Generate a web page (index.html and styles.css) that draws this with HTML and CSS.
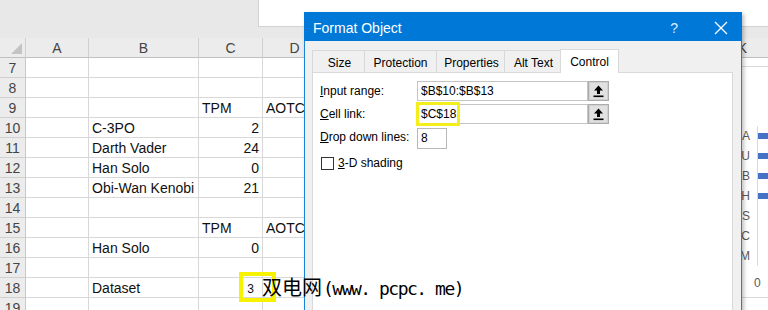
FILE: index.html
```html
<!DOCTYPE html>
<html lang="en">
<head>
  <meta charset="UTF-8">
  <title>Format Object</title>
  <link rel="stylesheet" href="styles.css">
</head>
<body>
  <div class="screen">
    <div class="ribbon">
      <div class="formula-box"></div>
    </div>

    <div class="sheet">
      <div class="row head"><div class="corner"></div><div>A</div><div>B</div><div>C</div><div>D</div><div></div><div>K</div></div>
      <div class="row"><div class="rh">7</div><div></div><div></div><div></div><div></div><div></div><div></div></div>
      <div class="row"><div class="rh">8</div><div></div><div></div><div></div><div></div><div></div><div></div></div>
      <div class="row"><div class="rh">9</div><div></div><div></div><div>TPM</div><div>AOTC</div><div></div><div></div></div>
      <div class="row"><div class="rh">10</div><div></div><div>C-3PO</div><div class="num">2</div><div></div><div></div><div></div></div>
      <div class="row"><div class="rh">11</div><div></div><div>Darth Vader</div><div class="num">24</div><div></div><div></div><div></div></div>
      <div class="row"><div class="rh">12</div><div></div><div>Han Solo</div><div class="num">0</div><div></div><div></div><div></div></div>
      <div class="row"><div class="rh">13</div><div></div><div>Obi-Wan Kenobi</div><div class="num">21</div><div></div><div></div><div></div></div>
      <div class="row"><div class="rh">14</div><div></div><div></div><div></div><div></div><div></div><div></div></div>
      <div class="row"><div class="rh">15</div><div></div><div></div><div>TPM</div><div>AOTC</div><div></div><div></div></div>
      <div class="row"><div class="rh">16</div><div></div><div>Han Solo</div><div class="num">0</div><div></div><div></div><div></div></div>
      <div class="row"><div class="rh">17</div><div></div><div></div><div></div><div></div><div></div><div></div></div>
      <div class="row"><div class="rh">18</div><div></div><div>Dataset</div><div class="num linked">3</div><div></div><div></div><div></div></div>
      <div class="row"><div class="rh">19</div><div></div><div></div><div></div><div></div><div></div><div></div></div>
    </div>

    <!-- chart sitting on the sheet, mostly hidden by the dialog -->
    <div class="chart">
      <div class="chart-rows">
        <div class="bar-row"><span>A</span><i></i></div>
        <div class="bar-row"><span>U</span><i></i></div>
        <div class="bar-row"><span>B</span><i></i></div>
        <div class="bar-row"><span>H</span><i></i></div>
        <div class="bar-row"><span>S</span></div>
        <div class="bar-row"><span>C</span></div>
        <div class="bar-row"><span>M</span></div>
      </div>
      <div class="axis-label">0</div>
    </div>

    <div class="cell-mark"></div>

    <div class="dialog">
      <div class="titlebar">
        <span class="title">Format Object</span>
        <span class="help">?</span>
        <svg class="close" width="14" height="14" viewBox="0 0 14 14"><path d="M1 1 L13 13 M13 1 L1 13" stroke="#fff" stroke-width="1.3"/></svg>
      </div>
      <div class="tabs">
        <div class="tab t-size">Size</div>
        <div class="tab t-prot">Protection</div>
        <div class="tab t-prop">Properties</div>
        <div class="tab t-alt">Alt Text</div>
        <div class="tab t-ctrl active">Control</div>
      </div>
      <div class="panel">
        <div class="form-row">
          <label><u>I</u>nput range:</label>
          <div class="field wide">$B$10:$B$13</div>
          <div class="pick"><svg width="11" height="13" viewBox="0 0 11 13"><path d="M5.5 0.5 L10 5.5 H7 V9 H4 V5.5 H1 Z" fill="#000"/><rect x="0.5" y="10.5" width="10" height="1.6" fill="#000"/></svg></div>
        </div>
        <div class="form-row">
          <label><u>C</u>ell link:</label>
          <div class="field wide">$C$18<span class="link-mark"></span></div>
          <div class="pick"><svg width="11" height="13" viewBox="0 0 11 13"><path d="M5.5 0.5 L10 5.5 H7 V9 H4 V5.5 H1 Z" fill="#000"/><rect x="0.5" y="10.5" width="10" height="1.6" fill="#000"/></svg></div>
        </div>
        <div class="form-row">
          <label><u>D</u>rop down lines:</label>
          <div class="field small">8</div>
        </div>
        <div class="check-row">
          <span class="box"></span>
          <span><u>3</u>-D shading</span>
        </div>
      </div>
    </div>

    <div class="watermark"><span class="wm-cn">双电网</span><span class="wm-en">(www. pcpc. me)</span></div>
  </div>
</body>
</html>
```

FILE: styles.css
```css
* {
  box-sizing: border-box;
}

body {
  margin: 0;
  font-family: "Liberation Sans", Arial, sans-serif;
  background-color: #fff;
  overflow: hidden;
}

.screen {
  position: relative;
  width: 768px;
  height: 310px;
  overflow: hidden;
}

.ribbon {
  height: 38px;
  background-color: #e8e8e8;
  padding-left: 258px;
}

.formula-box {
  height: 27px;
  background-color: #fff;
  border-left: 1px solid #d2d2d2;
  border-bottom: 1px solid #d2d2d2;
}

.row {
  display: grid;
  grid-template-columns: 26px 63px 110px 64px 64px 384px 64px;
  height: 20px;
  font-size: 14px;
  color: #111;
}

.row > div {
  border-right: 1px solid #d8d8d8;
  border-bottom: 1px solid #d8d8d8;
  padding: 0 3px;
  line-height: 20px;
  white-space: nowrap;
  overflow: hidden;
}

.row .num {
  text-align: right;
}

.row .linked {
  font-size: 12px;
  padding-right: 8px;
  line-height: 22px;
}

.row .rh {
  background-color: #ececec;
  border-right-color: #c8c8c8;
  border-bottom-color: #d0d0d0;
  color: #444;
  text-align: center;
  padding: 0;
}

.head > div {
  background-color: #ececec;
  border-bottom-color: #c0c0c0;
  border-right-color: #d0d0d0;
  color: #444;
  text-align: center;
}

.head .corner {
  position: relative;
}

.head .corner::after {
  content: "";
  position: absolute;
  right: 3px;
  bottom: 3px;
  border-left: 11px solid transparent;
  border-bottom: 11px solid #c4c4c4;
}

.chart {
  position: absolute;
  left: 700px;
  top: 66px;
  width: 100px;
  height: 232px;
  background-color: #fff;
  border: 1px solid #d9d9d9;
  padding: 59px 0 0 41px;
  font-size: 12px;
  color: #595959;
}

.chart-rows {
  border-left: 1px solid #d9d9d9;
  margin-left: 15px;
}

.bar-row {
  position: relative;
  height: 20px;
}

.bar-row span {
  position: absolute;
  right: 100%;
  margin-right: 8px;
  top: 3px;
}

.bar-row i {
  display: block;
  position: absolute;
  left: 0;
  top: 7px;
  width: 40px;
  height: 6px;
  background-color: #4472c4;
}

.axis-label {
  margin: 10px 0 0 12px;
}

.cell-mark {
  position: absolute;
  left: 239px;
  top: 272px;
  width: 37px;
  height: 30px;
  border: 4px solid #f7f200;
}

.dialog {
  position: absolute;
  left: 304px;
  top: 12px;
  width: 438px;
  height: 320px;
  background-color: #f0f0f0;
  border: 1px solid #1883d7;
  box-shadow: 2px 2px 4px rgba(0, 0, 0, 0.25);
  font-size: 12px;
  color: #000;
}

.titlebar {
  display: flex;
  align-items: center;
  height: 29px;
  margin: -1px -1px 0;
  padding-left: 9px;
  background-color: #0078d7;
  color: #fff;
}

.title {
  flex: 1;
  font-size: 14px;
  padding-top: 2px;
}

.help {
  font-size: 14px;
  margin-right: 36px;
  padding-top: 3px;
  color: #dbeeff;
}

.close {
  margin-right: 14px;
  margin-top: 2px;
}

.tabs {
  display: flex;
  align-items: flex-end;
  height: 31px;
  padding-left: 7px;
  position: relative;
  z-index: 1;
}

.tab {
  height: 22px;
  line-height: 24px;
  text-align: center;
  border: 1px solid #d9d9d9;
  border-right: none;
  border-bottom: none;
  background-color: #f0f0f0;
}

.t-size { width: 52px; padding-left: 2px; }
.t-prot { width: 72px; }
.t-prop { width: 68px; padding-left: 2px; }
.t-alt { width: 56px; padding-left: 2px; }

.tab.active {
  width: 59px;
  height: 24px;
  line-height: 25px;
  background-color: #fff;
  border-right: 1px solid #d9d9d9;
  margin-bottom: -1px;
}

.panel {
  margin: 0 8px 0 7px;
  height: 260px;
  background-color: #fff;
  border: 1px solid #d9d9d9;
  padding: 8px 0 0 7px;
}

.form-row {
  display: flex;
  align-items: center;
  height: 20px;
  margin-bottom: 3px;
}

.form-row label {
  width: 97px;
}

.field {
  position: relative;
  height: 20px;
  line-height: 18px;
  border: 1px solid #c4c4c4;
  padding-left: 3px;
}

.field.wide {
  width: 171px;
}

.field.small {
  width: 30px;
  height: 21px;
  margin-top: 2px;
  border-color: #b8b8b8;
}

.link-mark {
  position: absolute;
  left: -2px;
  top: -3px;
  width: 44px;
  height: 24px;
  border: 3px solid #f4ef1c;
}

.pick {
  display: flex;
  align-items: center;
  justify-content: center;
  width: 21px;
  height: 20px;
  background-color: #e1e1e1;
  border: 1px solid #acacac;
  box-shadow: inset 0 0 0 1px #d0d0d0;
}

.check-row {
  display: flex;
  align-items: center;
  gap: 4px;
  margin-top: 9px;
  padding-left: 1px;
}

.check-row .box {
  width: 13px;
  height: 13px;
  border: 1px solid #333;
  background-color: #fff;
}

.watermark {
  position: absolute;
  left: 262px;
  top: 274px;
  display: flex;
  align-items: baseline;
  color: #000;
  line-height: 26px;
}

.wm-cn {
  font-family: "Noto Sans CJK SC", sans-serif;
  font-size: 20px;
}

.wm-en {
  font-family: "DejaVu Sans Mono", monospace;
  font-size: 18px;
  letter-spacing: -1.5px;
  margin-left: 1px;
}
```
